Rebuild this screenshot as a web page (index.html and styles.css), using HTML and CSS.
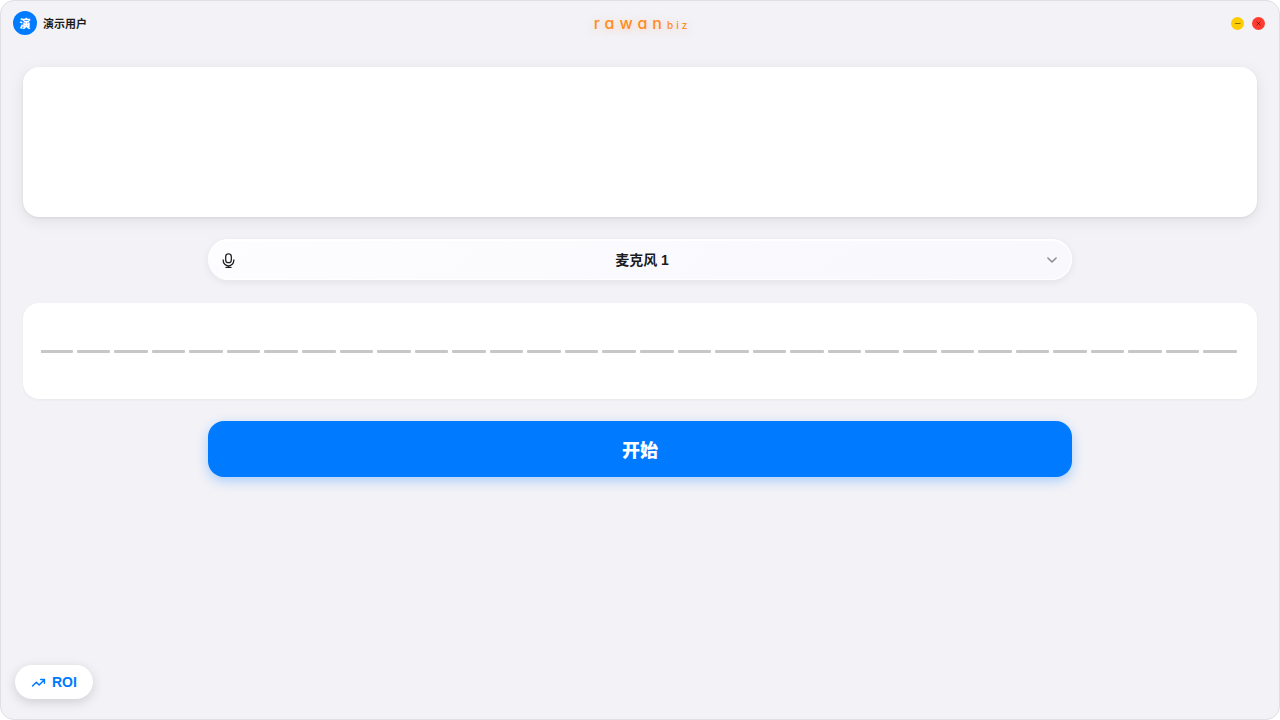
FILE: index.html
```html
<!DOCTYPE html>
<html lang="zh-CN">
<head>
<meta charset="utf-8">
<title>rawan biz</title>
<link rel="stylesheet" href="styles.css">
</head>
<body>
<div class="window">
  <header class="titlebar">
    <div class="user"><span class="avatar">演</span><span class="user-name">演示用户</span></div>
    <div class="logo"><span class="logo-main">rawan</span><span class="logo-sub">biz</span></div>
    <div class="controls">
      <button class="control minimize" type="button" aria-label="最小化"><svg viewBox="0 0 13 13"><path d="M4 6.5h5.500"/></svg></button>
      <button class="control close" type="button" aria-label="关闭"><svg viewBox="0 0 13 13"><path d="M4.500 4.500l4 4M8.500 4.500l-4 4"/></svg></button>
    </div>
  </header>
  <main class="content">
    <section class="card transcript"></section>
    <div class="device">
      <svg class="mic" viewBox="0 0 24 24"><rect x="7.500" y="1.500" width="9" height="14" rx="4.500"/><path d="M3.500 11v1a8.500 8.500 0 0 0 17 0V11M12 20.500v2.500M8 23h8"/></svg>
      <select class="device-select" aria-label="麦克风"><option>麦克风 1</option></select>
      <svg class="chevron" viewBox="0 0 12 12"><path d="M2.500 4.300L6 7.700l3.500-3.400"/></svg>
    </div>
    <section class="card meter">
      <div class="meter-view">
        <div class="bars">
          <i></i><i></i><i></i><i></i><i></i><i></i><i></i><i></i>
          <i></i><i></i><i></i><i></i><i></i><i></i><i></i><i></i>
          <i></i><i></i><i></i><i></i><i></i><i></i><i></i><i></i>
          <i></i><i></i><i></i><i></i><i></i><i></i><i></i><i></i>
        </div>
      </div>
    </section>
    <button class="start" type="button">开始</button>
  </main>
  <footer class="footer">
    <button class="roi" type="button"><svg viewBox="0 0 24 24"><path d="M2.500 17.500l6-6 4.500 4.500L21 8M15.500 7H21.500V13"/></svg><span>ROI</span></button>
  </footer>
</div>
</body>
</html>
```
FILE: styles.css
```css
* { box-sizing: border-box; }

body {
  margin: 0;
  background: #fff;
  color: #1c1c1e;
  font-family: "Liberation Sans", Arial, "Noto Sans CJK SC", sans-serif;
}

button, select { font-family: inherit; border: 0; margin: 0; }

.window {
  min-height: 100vh;
  display: flex;
  flex-direction: column;
  background: #f2f2f7;
  border: 1px solid #dfdfe4;
  border-radius: 14px;
}

.titlebar {
  display: grid;
  grid-template-columns: 1fr auto 1fr;
  align-items: center;
  height: 44px;
  padding: 0 14px 0 12px;
}

.user { display: flex; align-items: center; gap: 6px; }

.avatar {
  display: grid;
  place-items: center;
  width: 24px;
  height: 24px;
  border-radius: 50%;
  background: #007aff;
  color: #fff;
  font-size: 11px;
  font-weight: 900;
}

.user-name { font-size: 11px; font-weight: 600; }

.logo {
  display: flex;
  align-items: baseline;
  padding-left: 6px;
  color: #ff8c1f;
  font-family: Inter, sans-serif;
  font-feature-settings: "cv11";
  text-shadow: 0 2px 8px rgba(255, 140, 40, 0.35);
}

.logo-main { font-size: 16px; line-height: 20px; font-weight: 500; letter-spacing: 5px; }
.logo-sub { font-size: 10px; font-weight: 500; letter-spacing: 3px; }

.controls { display: flex; justify-content: flex-end; gap: 8px; }

.control {
  display: block;
  width: 13px;
  height: 13px;
  padding: 0;
  border-radius: 50%;
}

.control svg {
  display: block;
  width: 13px;
  height: 13px;
  fill: none;
  stroke: rgba(0, 0, 0, 0.45);
}

.minimize { background: #ffcc00; }
.close { background: #ff3b30; }

.content {
  flex: 1;
  display: flex;
  flex-direction: column;
  align-items: center;
  gap: 22px;
  padding: 22px;
}

.card { width: 100%; background: #fff; border-radius: 16px; }

.transcript {
  height: 150px;
  box-shadow: 0 4px 16px rgba(0, 0, 0, 0.08), 0 1px 3px rgba(0, 0, 0, 0.07);
}

.device {
  display: grid;
  align-items: center;
  width: 70%;
  height: 42px;
}

.device > * { grid-area: 1 / 1; }

.device-select {
  appearance: none;
  align-self: start;
  width: 100%;
  height: 41px;
  padding: 0 38px 0 42px;
  border-radius: 21px;
  background: linear-gradient(135deg, #fdfdff, #f8f8fd);
  box-shadow: 0 2px 8px rgba(0, 0, 0, 0.07), inset 0 2px 1px #fff, inset -1px -1px 1px #fff;
  color: #1c1c1e;
  font-size: 14px;
  font-weight: 600;
  text-align: center;
  text-align-last: center;
}

.mic, .chevron {
  z-index: 1;
  pointer-events: none;
  fill: none;
  stroke: #1c1c1e;
  stroke-width: 2;
  stroke-linecap: round;
  stroke-linejoin: round;
}

.mic { width: 15px; height: 15px; margin-left: 13px; }

.chevron {
  justify-self: end;
  width: 14px;
  height: 14px;
  margin-right: 13px;
  stroke: #8e8e93;
  stroke-width: 1.4;
}

.meter {
  display: flex;
  align-items: center;
  height: 96px;
  padding: 0 20px 0 18px;
  box-shadow: 0 1px 3px rgba(0, 0, 0, 0.05);
}

.meter-view { flex: 1; overflow: hidden; }
.bars { display: flex; gap: 4px; margin-left: -2px; }
.bars i { flex: 1; height: 3px; border-radius: 1px; background: #c7c7c7; }

.start {
  width: 70%;
  height: 56px;
  border-radius: 16px;
  background: #007aff;
  box-shadow: 0 4px 12px rgba(0, 122, 255, 0.3);
  color: #fff;
  font-size: 18px;
  font-weight: 900;
}

.footer { padding: 0 14px 20px; }

.roi {
  display: flex;
  align-items: center;
  gap: 6px;
  height: 34px;
  padding: 0 16px;
  border-radius: 17px;
  background: #fff;
  box-shadow: 0 3px 12px rgba(0, 0, 0, 0.15);
  color: #007aff;
  font-size: 14px;
  font-weight: 700;
}

.roi svg {
  width: 15px;
  height: 15px;
  fill: none;
  stroke: #007aff;
  stroke-width: 2.4;
  stroke-linecap: round;
  stroke-linejoin: round;
}
```
